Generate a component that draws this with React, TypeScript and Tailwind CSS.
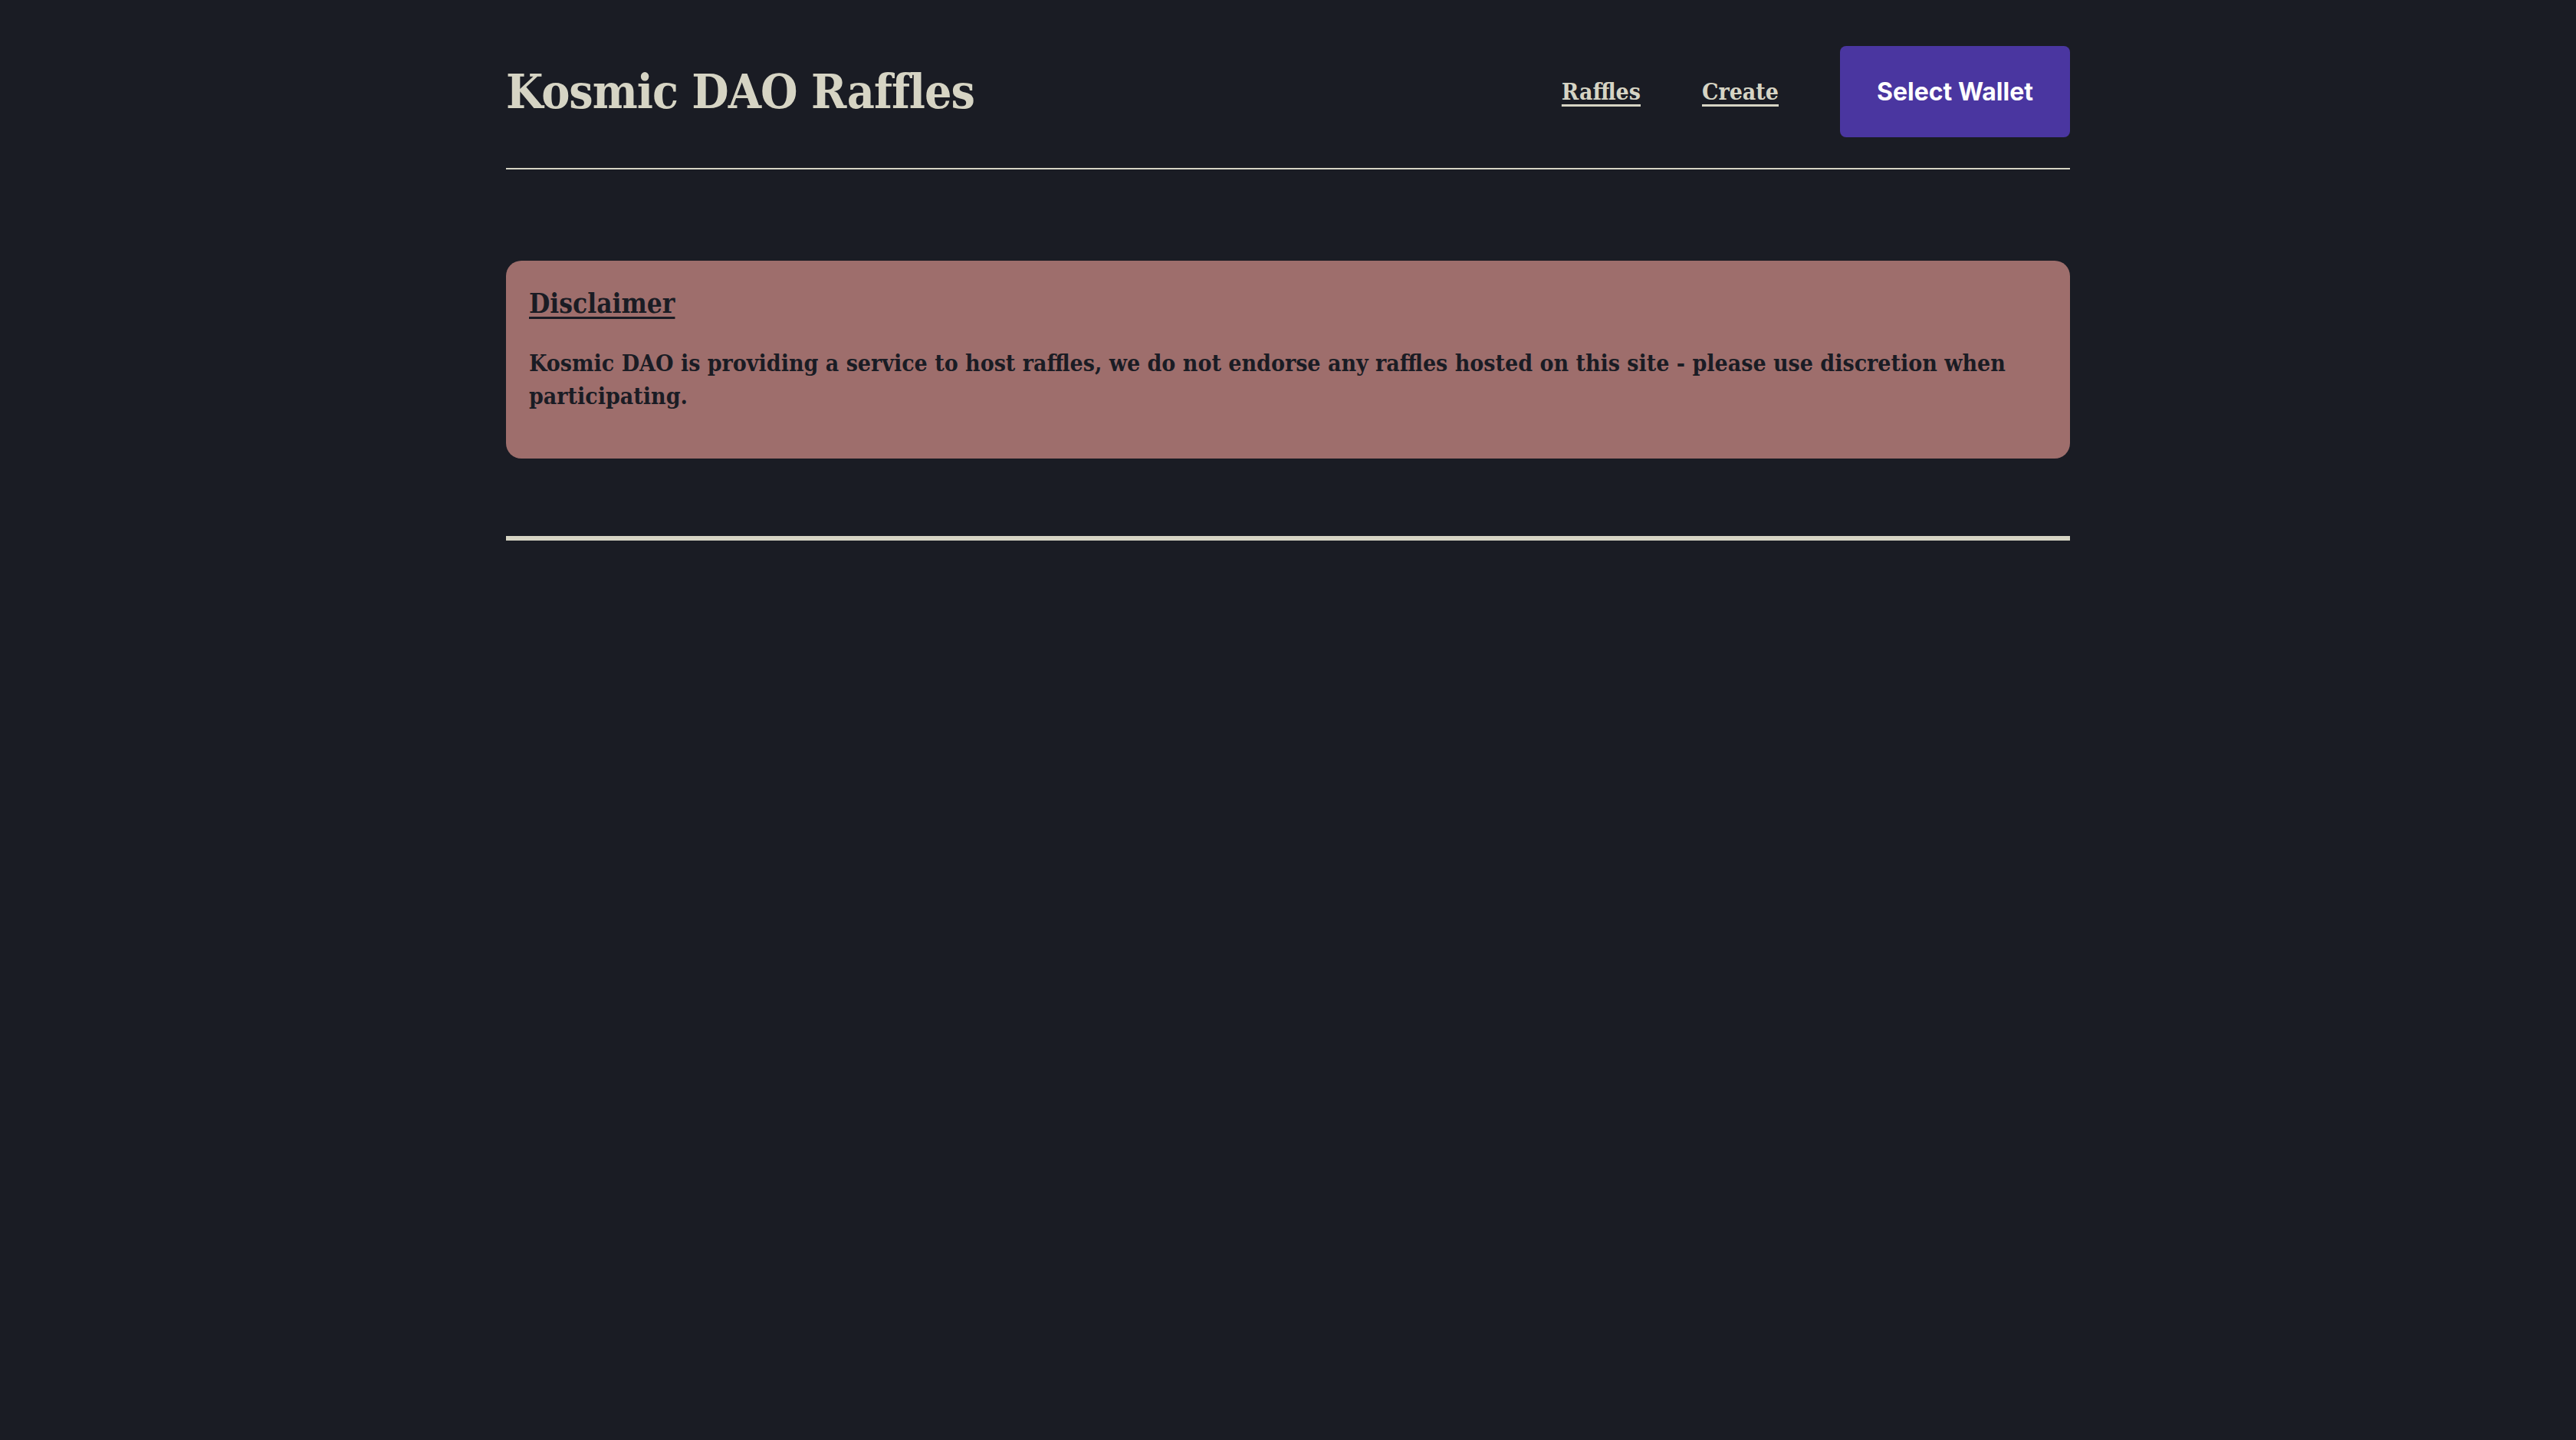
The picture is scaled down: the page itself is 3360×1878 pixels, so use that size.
import React from "react";

export default function App() {
  return (
    <div className="min-h-screen w-full bg-[#1a1c24]">
      <div className="mx-auto w-[2040px]">
        <header className="flex items-center justify-between border-b-2 border-[#d6d4c4] pt-[60px] pb-[40px]">
          <h1 className="font-['DejaVu_Serif','Liberation_Serif',serif] text-[62px] font-bold leading-none tracking-[-1px] text-[#d6d4c4] [font-stretch:condensed]">
            Kosmic DAO Raffles
          </h1>
          <nav className="flex items-center gap-[80px]">
            <a
              href="#"
              className="font-['DejaVu_Serif','Liberation_Serif',serif] text-[30px] font-bold text-[#d6d4c4] underline decoration-[3px] underline-offset-[6px] [font-stretch:condensed]"
            >
              Raffles
            </a>
            <a
              href="#"
              className="font-['DejaVu_Serif','Liberation_Serif',serif] text-[30px] font-bold text-[#d6d4c4] underline decoration-[3px] underline-offset-[6px] [font-stretch:condensed]"
            >
              Create
            </a>
            <button className="flex h-[119px] w-[300px] items-center justify-center rounded-[8px] bg-[#4a36a0] font-['Inter','Noto_Sans',sans-serif] text-[32px] font-bold text-white">
              Select Wallet
            </button>
          </nav>
        </header>

        <section className="mt-[119px] h-[258px] rounded-[20px] bg-[#9e6e6c] px-[30px] pt-[32px]">
          <h2 className="font-['DejaVu_Serif','Liberation_Serif',serif] text-[35px] font-bold leading-[48px] text-[#1a1c24] underline decoration-[3px] underline-offset-[5px] [font-stretch:condensed]">
            Disclaimer
          </h2>
          <p className="mt-[32px] font-['DejaVu_Serif','Liberation_Serif',serif] text-[30px] font-bold leading-[43px] text-[#1a1c24] [font-stretch:condensed]">
            Kosmic DAO is providing a service to host raffles, we do not endorse any raffles hosted on this
            site - please use discretion when participating.
          </p>
        </section>

        <div className="mt-[101px] h-[6px] w-full bg-[#d6d4c4]" />
      </div>
    </div>
  );
}
